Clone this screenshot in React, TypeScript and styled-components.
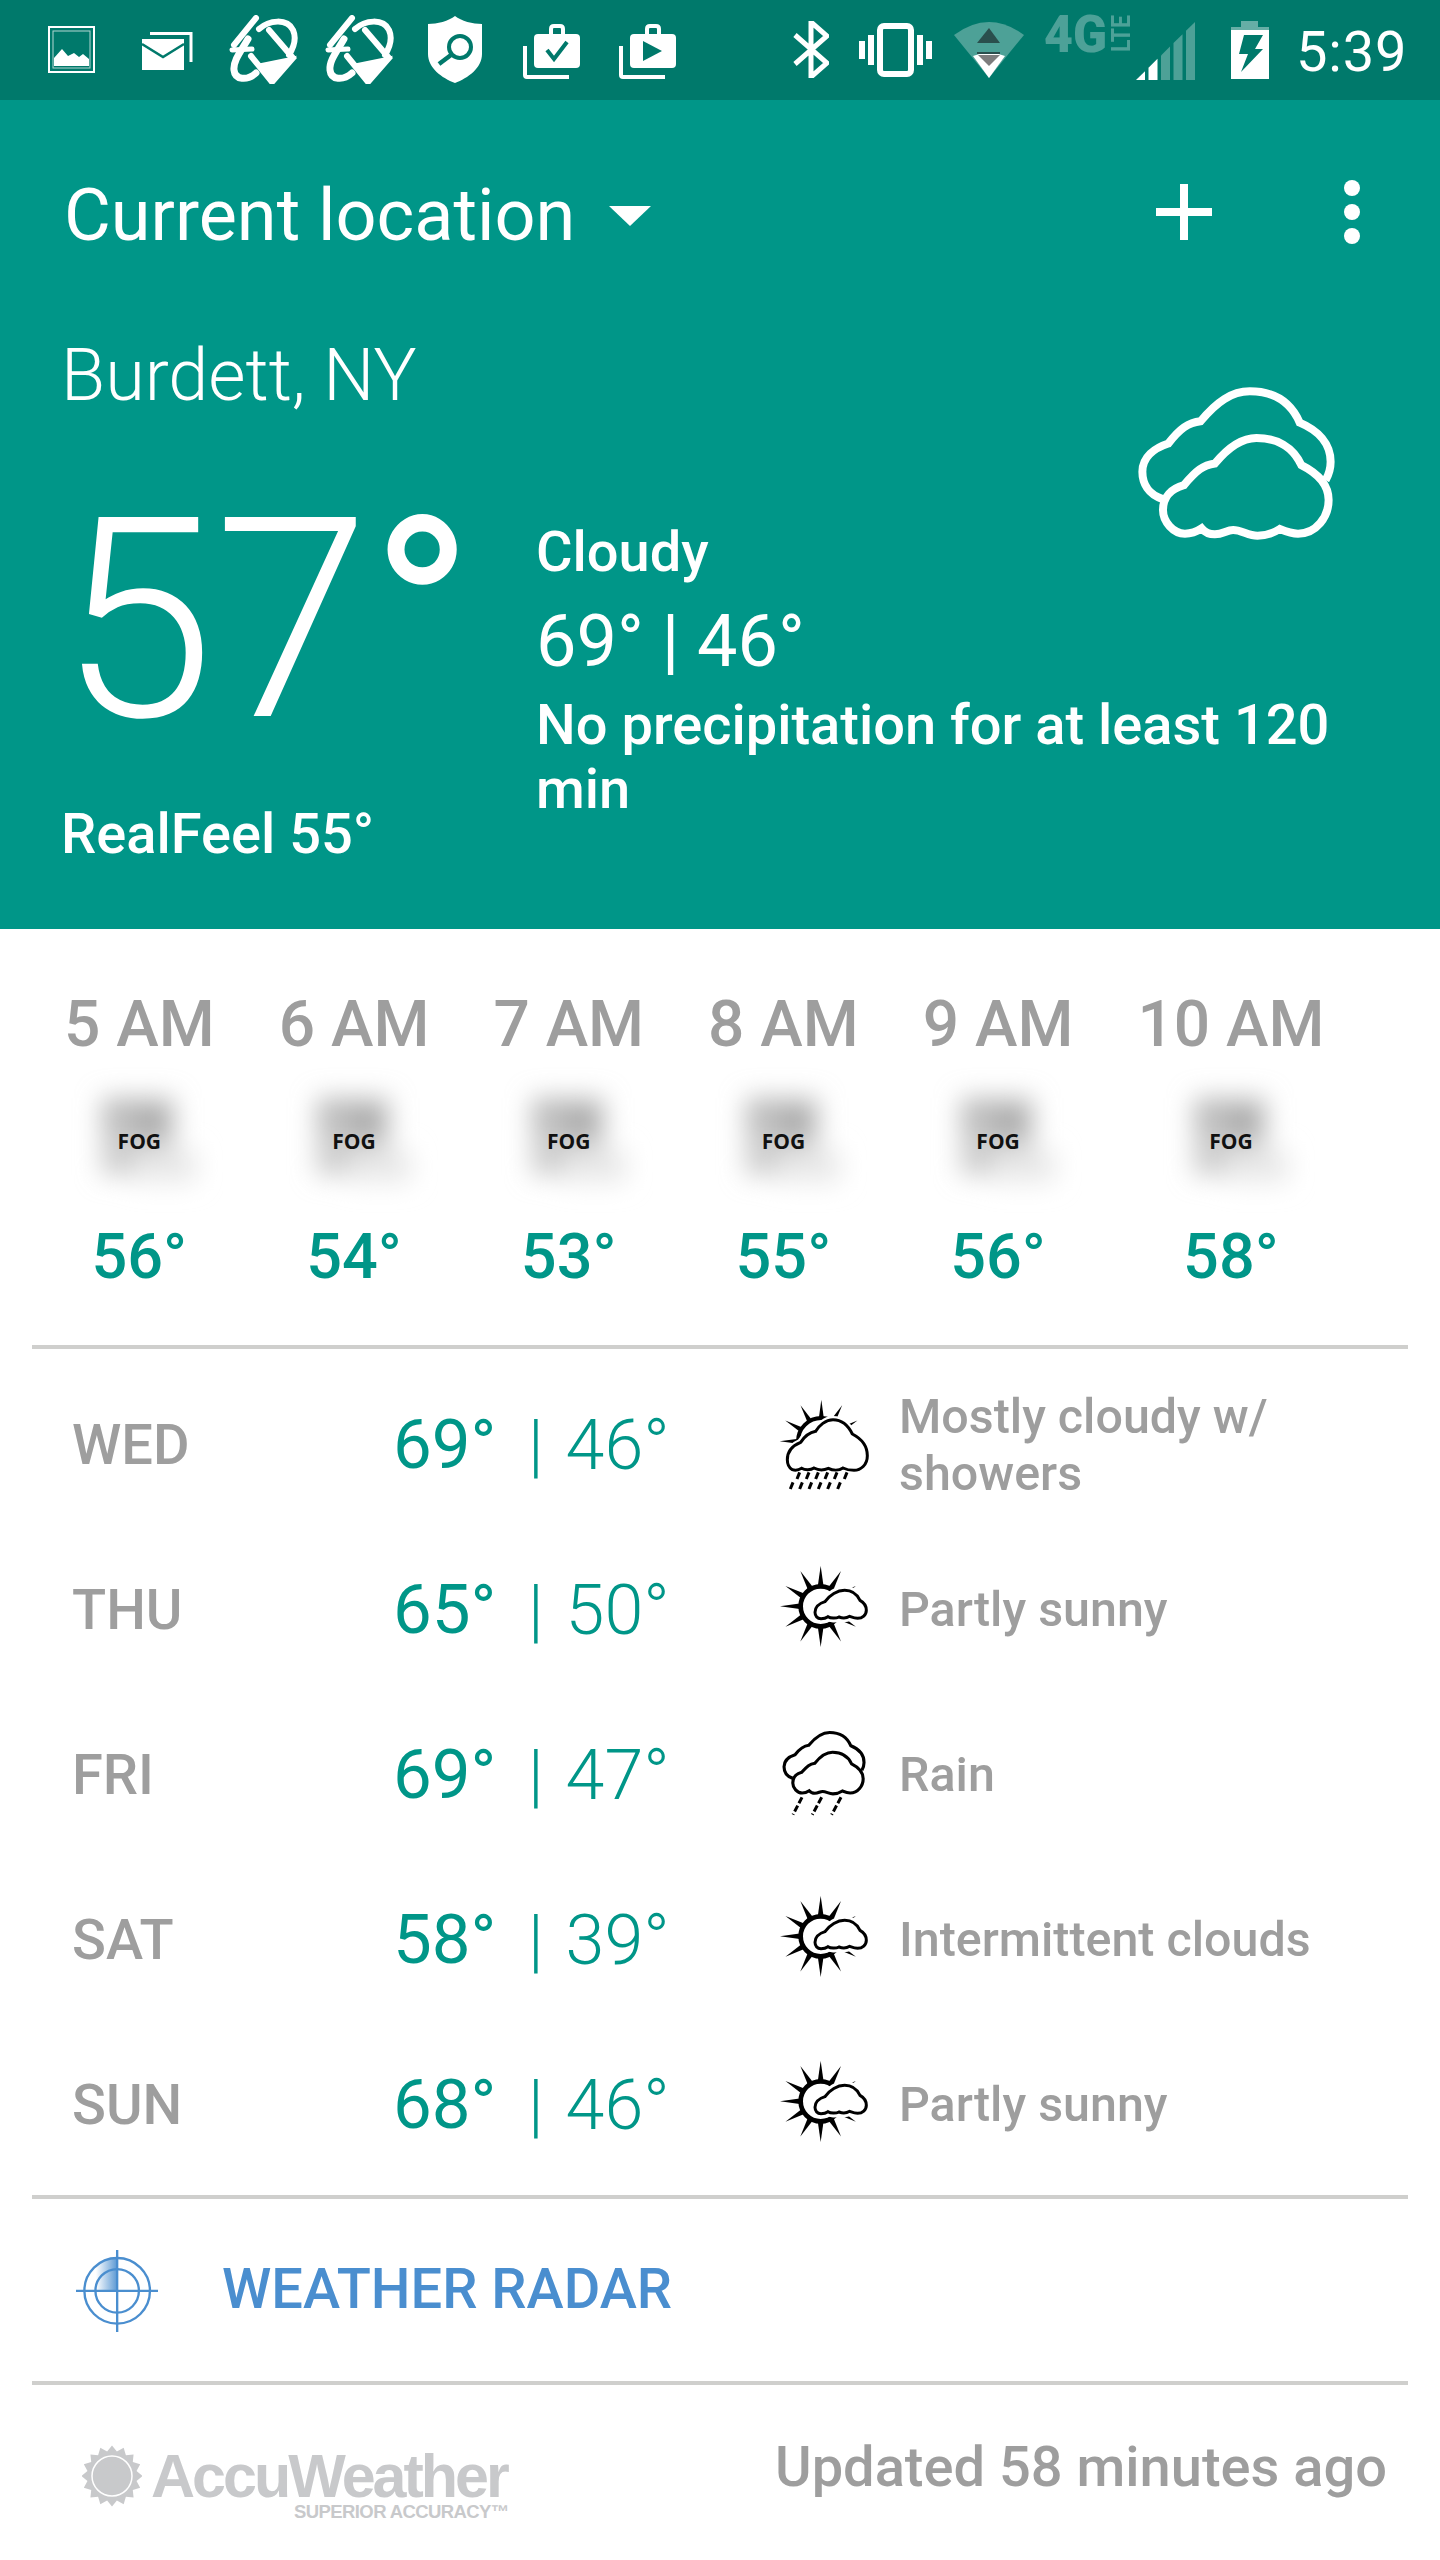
import React from "react";
import styled, { createGlobalStyle } from "styled-components";

const Global = createGlobalStyle`
  html, body { margin: 0; padding: 0; background: #fff; }
  body { font-family: Roboto, "Liberation Sans", sans-serif; }
`;

const Page = styled.div`
  width: 1440px;
  height: 2560px;
  overflow: hidden;
  background: #fff;
`;

const StatusBar = styled.div`
  height: 100px;
  background: #00796b;
  display: flex;
  align-items: flex-start;
  padding-left: 48px;
  box-sizing: border-box;
`;

const StatusIcon = styled.svg<{ $w: number; $h: number; $top: number; $gap: number }>`
  flex: none;
  width: ${(p) => p.$w}px;
  height: ${(p) => p.$h}px;
  margin-top: ${(p) => p.$top}px;
  margin-right: ${(p) => p.$gap}px;
  display: block;
`;

const Clock = styled.div`
  color: #fff;
  font-size: 56px;
  font-weight: 400;
  line-height: 56px;
  margin-top: 24px;
  margin-left: -2px;
  letter-spacing: 0.8px;
`;

const Header = styled.div`
  background: #009688;
  height: 829px;
  color: #fff;
  box-sizing: border-box;
`;

const Toolbar = styled.div`
  display: flex;
  align-items: center;
  height: 56px;
  padding: 88px 0 0 64px;
`;

const LocationTitle = styled.div`
  font-size: 72px;
  line-height: 56px;
  font-weight: 400;
`;

const Caret = styled.div`
  width: 0;
  height: 0;
  border-left: 21px solid transparent;
  border-right: 21px solid transparent;
  border-top: 20px solid #fff;
  margin-left: 34px;
  margin-right: 505px;
`;

const PlusIcon = styled.svg`
  width: 56px;
  height: 56px;
  margin-right: 132px;
  margin-top: -8px;
  flex: none;
`;

const MoreIcon = styled.svg`
  width: 16px;
  height: 64px;
  margin-top: -8px;
  flex: none;
`;

const Body = styled.div`
  display: flex;
`;

const LeftCol = styled.div`
  width: 476px;
  flex: none;
  box-sizing: border-box;
  padding: 92px 0 0 61px;
`;

const City = styled.div`
  font-size: 72px;
  font-weight: 300;
  line-height: 80px;
`;

const BigTemp = styled.div`
  font-size: 280px;
  font-weight: 300;
  line-height: 300px;
  margin: 54px 0 0 -2px;
  white-space: nowrap;
`;

const BigDegree = styled.span`
  font-weight: 400;
`;

const RealFeel = styled.div`
  font-size: 56px;
  font-weight: 500;
  line-height: 60px;
  margin-top: 34px;
`;

const RightCol = styled.div`
  width: 830px;
  margin-left: 60px;
  flex: none;
  display: flex;
  flex-direction: column;
`;

const BigCloud = styled.svg`
  width: 197px;
  height: 153px;
  margin: 143px 0 0 602px;
  flex: none;
`;

const Condition = styled.div`
  font-size: 56px;
  font-weight: 500;
  line-height: 60px;
  margin-top: -18px;
`;

const HiLo = styled.div`
  font-size: 72px;
  font-weight: 400;
  line-height: 80px;
  margin-top: 20px;
`;

const Precip = styled.div`
  font-size: 56px;
  font-weight: 500;
  line-height: 64px;
  margin-top: 11px;
  width: 830px;
`;

const Hours = styled.div`
  display: flex;
  gap: 64px;
  padding: 60px 0 0 64px;
  height: 416px;
  box-sizing: border-box;
`;

const HourCol = styled.div`
  display: flex;
  flex-direction: column;
  align-items: center;
`;

const HourLabel = styled.div`
  font-size: 64px;
  line-height: 72px;
  color: #9e9e9e;
  font-weight: 500;
`;

const FogBox = styled.div`
  position: relative;
  width: 130px;
  height: 110px;
  margin-top: 29px;
`;

const FogBlob = styled.svg`
  position: absolute;
  inset: 0;
  width: 130px;
  height: 110px;
  overflow: visible;
`;

const FogText = styled.div`
  position: absolute;
  left: 0;
  right: 0;
  top: 39px;
  text-align: center;
  font-family: "Open Sans", sans-serif;
  font-size: 21px;
  line-height: 24px;
  font-weight: 700;
  color: #111;
`;

const HourTemp = styled.div`
  font-size: 63px;
  line-height: 70px;
  font-weight: 500;
  color: #009688;
  margin-top: 22px;
`;

const Rule = styled.div`
  height: 4px;
  background: #cfcfcd;
  margin: 0 32px;
`;

const Forecast = styled.div`
  display: flex;
  flex-direction: column;
  height: 846px;
  box-sizing: border-box;
  padding-top: 13px;
`;

const DayRow = styled.div`
  display: flex;
  align-items: center;
  height: 165px;
  flex: none;
`;

const DayName = styled.div`
  width: 393px;
  padding-left: 72px;
  box-sizing: border-box;
  font-size: 56px;
  font-weight: 500;
  color: #9e9e9e;
  flex: none;
`;

const TempHigh = styled.div`
  width: 135px;
  font-size: 69px;
  color: #009688;
  flex: none;
`;

const TempLow = styled.div`
  width: 254px;
  font-size: 70px;
  font-weight: 300;
  color: #009688;
  flex: none;
  white-space: nowrap;
  word-spacing: 5px;
`;

const DayIconBox = styled.div`
  width: 120px;
  flex: none;
  display: flex;
  justify-content: flex-start;
  margin-left: -3px;
`;

const DayIcon = styled.svg`
  width: 90px;
  height: 92px;
  display: block;
`;

const DayText = styled.div`
  width: 480px;
  font-size: 48.4px;
  line-height: 57px;
  font-weight: 500;
  color: #9e9e9e;
`;

const RadarRow = styled.div`
  display: flex;
  align-items: center;
  height: 182px;
  padding-left: 76px;
`;

const RadarIcon = styled.svg`
  width: 82px;
  height: 82px;
  margin-right: 64px;
  margin-top: 2px;
  flex: none;
`;

const RadarLabel = styled.div`
  font-size: 56px;
  font-weight: 500;
  color: #4a8ecf;
  margin-bottom: 2px;
`;

const Footer = styled.div`
  display: flex;
  justify-content: space-between;
  padding: 66px 53px 0 82px;
`;

const Logo = styled.div`
  display: flex;
  align-items: flex-start;
  gap: 9px;
  color: #c8c9cb;
  font-family: "Liberation Sans", Arial, sans-serif;
  font-weight: 700;
`;

const LogoSun = styled.svg`
  width: 60px;
  height: 62px;
  margin-top: -6px;
  flex: none;
`;

const LogoWords = styled.div`
  display: flex;
  flex-direction: column;
  align-items: flex-end;
`;

const LogoName = styled.div`
  font-size: 61px;
  line-height: 50px;
  letter-spacing: -3px;
  margin-right: 2px;
`;

const LogoTag = styled.div`
  font-size: 18.5px;
  line-height: 20px;
  letter-spacing: -0.6px;
  margin-top: 1px;
`;

const Updated = styled.div`
  font-size: 56px;
  font-weight: 500;
  color: #9e9e9e;
  line-height: 64px;
  margin-top: -16px;
`;

const BG = "#00796b";

const TLogo = () => (
  <g fill="none" stroke="#fff" strokeWidth="5" strokeLinecap="round">
    <path d="M27 3 L5 30" strokeWidth="6" />
    <path d="M30 14 C40 5 58 3 64 15 C68 24 65 32 60 40" strokeWidth="6" />
    <path d="M40 15 L64 43 L43 67 L22 41" strokeWidth="6" />
    <path d="M19 24 C12 36 4 46 5 55 C6 65 18 66 27 58" strokeWidth="7" />
    <path d="M3 35 L23 34" strokeWidth="5" />
    <path d="M64 43 L43 67 L30 50 Z" fill="#fff" strokeWidth="3" />
  </g>
);

const ClipBase = ({ children }: { children: React.ReactNode }) => (
  <>
    <path d="M2 22 V51 Q2 53 4 53 H46" fill="none" stroke="#fff" strokeWidth="4" />
    <rect x="11" y="10" width="46" height="34" rx="4" fill="#fff" />
    <path d="M28 10 V5 Q28 2 31 2 H37 Q40 2 40 5 V10" fill="none" stroke="#fff" strokeWidth="4" />
    {children}
  </>
);

const signalBars = [0, 12.5, 25, 37.5, 50].map((x0, i) => {
  const x1 = x0 + 9;
  const h = (x: number) => 60 - (x * 60) / 61;
  return { points: `${x0},60 ${x0},${h(x0)} ${x1},${h(x1)} ${x1},60`, on: i < 2 };
});

const StatusIcons = () => (
  <>
    <StatusIcon $w={47} $h={47} $top={26} $gap={47} viewBox="0 0 47 47">
      <rect x="1" y="1" width="45" height="45" fill="none" stroke="#fff" strokeWidth="2" />
      <rect x="5" y="5" width="37" height="37" fill="none" stroke="#fff" strokeWidth="1" opacity="0.7" />
      <path d="M6 40 V32 L14 23 L20 30 L26 27 L31 31 L35 28 L41 33 V40 Z" fill="#fff" />
    </StatusIcon>
    <StatusIcon $w={51} $h={40} $top={30} $gap={36} viewBox="0 0 51 40">
      <path d="M8 3.5 H49 V32" fill="none" stroke="#fff" strokeWidth="3" />
      <rect x="0" y="9" width="42" height="31" fill="#fff" />
      <path d="M0 14 L21 27 L42 14" fill="none" stroke={BG} strokeWidth="2.5" />
    </StatusIcon>
    <StatusIcon $w={69} $h={69} $top={15} $gap={27} viewBox="0 0 69 69"><TLogo /></StatusIcon>
    <StatusIcon $w={69} $h={69} $top={15} $gap={34} viewBox="0 0 69 69"><TLogo /></StatusIcon>
    <StatusIcon $w={54} $h={67} $top={16} $gap={41} viewBox="0 0 54 67">
      <path d="M27 0 C33 5 45 8 54 8 V38 C54 52 40 62 27 67 C14 62 0 52 0 38 V8 C9 8 21 5 27 0 Z" fill="#fff" />
      <circle cx="32" cy="31" r="11" fill="none" stroke={BG} strokeWidth="4" />
      <path d="M23 39 L11 48" stroke={BG} strokeWidth="4.5" />
    </StatusIcon>
    <StatusIcon $w={57} $h={55} $top={24} $gap={39} viewBox="0 0 57 55">
      <ClipBase>
        <path d="M24 26 L31 35 L44 18" fill="none" stroke={BG} strokeWidth="4" />
      </ClipBase>
    </StatusIcon>
    <StatusIcon $w={57} $h={55} $top={24} $gap={117} viewBox="0 0 57 55">
      <ClipBase>
        <path d="M24 17 L43 27 L24 37 Z" fill={BG} />
      </ClipBase>
    </StatusIcon>
    <StatusIcon $w={36} $h={57} $top={21} $gap={30} viewBox="0 0 36 57">
      <path d="M2 14 L34 42 L18 56 V1 L34 15 L2 43" fill="none" stroke="#fff" strokeWidth="5" />
    </StatusIcon>
    <StatusIcon $w={73} $h={54} $top={23} $gap={22} viewBox="0 0 73 54">
      <rect x="21" y="3" width="31" height="48" rx="4" fill="none" stroke="#fff" strokeWidth="6" />
      <rect x="0" y="18" width="6" height="18" fill="#fff" />
      <rect x="9" y="12" width="6" height="30" fill="#fff" />
      <rect x="58" y="12" width="6" height="30" fill="#fff" />
      <rect x="67" y="18" width="6" height="18" fill="#fff" />
    </StatusIcon>
    <StatusIcon $w={71} $h={56} $top={22} $gap={19} viewBox="0 0 71 56">
      <path d="M0 13 Q35 -13 70 13 L35 56 Z" fill="#fff" opacity="0.3" />
      <path d="M19 34 Q35 27 51 34 L35 56 Z" fill="#fff" />
      <path d="M23 21 L35 6 L46 21 Z" fill="#2a4f4d" />
      <rect x="23" y="30" width="23" height="2" fill="#2a4f4d" />
      <path d="M24 33 H46 L35 44 Z" fill="#7d7d7d" />
    </StatusIcon>
    <StatusIcon $w={92} $h={70} $top={0} $gap={0} viewBox="0 0 92 70">
      <text x="0" y="52" fontFamily="Roboto, sans-serif" fontWeight="900" fontSize="52" fill="#fff" opacity="0.3" textLength="63" lengthAdjust="spacingAndGlyphs">4G</text>
      <text transform="translate(86 52) rotate(-90)" x="0" y="0" fontFamily="Roboto, sans-serif" fontWeight="700" fontSize="25" fill="#fff" opacity="0.3" textLength="37" lengthAdjust="spacingAndGlyphs">LTE</text>
    </StatusIcon>
    <StatusIcon $w={61} $h={60} $top={20} $gap={34} viewBox="0 0 61 60">
      {signalBars.map((b) => (
        <polygon key={b.points} points={b.points} fill="#fff" opacity={b.on ? 1 : 0.3} />
      ))}
    </StatusIcon>
    <StatusIcon $w={38} $h={58} $top={21} $gap={29} viewBox="0 0 38 58">
      <path d="M10 0 H27 V6 H38 V9 H0 V6 H10 Z" fill="#fff" opacity="0.4" />
      <rect x="0" y="9" width="38" height="49" fill="#fff" />
      <path d="M13 14 H32 L24 28 H32 L10 51 L17 33 H8 Z" fill={BG} />
    </StatusIcon>
  </>
);

const DOUBLE_BACK =
  "M248 1042 C205 1028 187 995 187 960 C187 915 225 888 265 875 C300 830 325 812 362 808 C410 750 455 718 510 718 C590 718 635 755 660 812 C715 835 753 875 753 930 C753 950 748 968 738 985";
const DOUBLE_FRONT =
  "M312 1000 C350 955 370 940 405 935 C450 880 490 858 530 858 C590 858 640 885 665 940 C715 965 747 1000 747 1045 C747 1095 710 1146 655 1146 C635 1146 620 1140 600 1132 C580 1145 560 1152 533 1152 C505 1152 485 1135 460 1135 C440 1135 430 1148 405 1148 C390 1148 375 1142 365 1130 C350 1140 335 1146 315 1146 C280 1146 249 1110 249 1075 C249 1035 275 1010 312 1000 Z";

const rays = (cx: number, cy: number, angles: number[], r0: number, r1: number, w: number) =>
  angles.map((a) => {
    const t = (a * Math.PI) / 180;
    const ux = Math.sin(t);
    const uy = -Math.cos(t);
    const bx = cx + ux * r0;
    const by = cy + uy * r0;
    const p = `${bx - uy * w},${by + ux * w} ${cx + ux * r1},${cy + uy * r1} ${bx + uy * w},${by - ux * w}`;
    return <polygon key={a} points={p} fill="#000" />;
  });

const SMALL_CLOUD =
  "M168 700 C168 682 182 673 198 668 C212 648 235 634 257 634 C280 634 295 648 303 664 C316 671 322 682 322 694 C322 708 310 718 296 718 C287 718 280 715 272 712 C262 718 250 718 240 714 C230 719 215 718 207 713 C200 718 192 719 186 719 C175 719 168 711 168 700 Z";
const SHOWER_CLOUD =
  "M85 232 C85 205 105 188 125 180 C138 160 155 150 170 147 C180 130 200 112 222 112 C250 112 268 130 280 155 C305 168 325 190 325 220 C325 248 305 264 285 264 C270 264 262 262 252 257 C240 265 222 265 208 258 C195 264 178 264 165 257 C155 264 138 264 128 258 C118 264 108 265 100 262 C90 256 85 245 85 232 Z";

const PartlySunnyIcon = () => (
  <DayIcon viewBox="60 555 270 276">
    {rays(185, 682, [0, 30, 60, 90, 120, 150, 180, 210, 240, 270, 300, 330], 58, 122, 9)}
    <circle cx="185" cy="682" r="60" fill="#fff" stroke="#000" strokeWidth="14" />
    <path d={SMALL_CLOUD} fill="#fff" stroke="#fff" strokeWidth="26" />
    <path d={SMALL_CLOUD} fill="#fff" stroke="#000" strokeWidth="9" />
  </DayIcon>
);

const ShowerIcon = () => (
  <DayIcon viewBox="60 50 270 276">
    {rays(187, 177, [0, 30, 60, 90, 300, 330, 270, 240], 58, 125, 9)}
    <circle cx="187" cy="177" r="70" fill="#fff" stroke="#000" strokeWidth="12" />
    <path d={SHOWER_CLOUD} fill="#fff" stroke="#fff" strokeWidth="22" />
    <path d={SHOWER_CLOUD} fill="#fff" stroke="#000" strokeWidth="9" />
    <g stroke="#000" strokeWidth="9">
      {[122, 150, 178, 206, 234, 264].map((x) => (
        <path key={x} d={`M${x} 270 L${x - 8} 290`} />
      ))}
      {[100, 128, 156, 184, 212, 242].map((x) => (
        <path key={x} d={`M${x + 2} 300 L${x - 6} 320`} />
      ))}
    </g>
  </DayIcon>
);

const RainIcon = () => (
  <DayIcon viewBox="60 85 270 276">
    <g transform="translate(70 90) scale(0.424) translate(-175 -705)" fill="none" stroke="#000" strokeWidth="22">
      <path d={DOUBLE_BACK} />
      <path d={DOUBLE_FRONT} />
    </g>
    <g stroke="#000" strokeWidth="9">
      <path d="M129 290 L102 342" strokeDasharray="20 8" />
      <path d="M188 290 L160 342" strokeDasharray="20 8" />
      <path d="M246 290 L218 342" strokeDasharray="20 8" />
    </g>
  </DayIcon>
);

const FogIcon = () => (
  <FogBox>
    <FogBlob viewBox="0 0 130 110">
      <defs>
        <filter id="fogblur" x="-60%" y="-60%" width="220%" height="220%">
          <feGaussianBlur stdDeviation="13" />
        </filter>
      </defs>
      <g filter="url(#fogblur)">
        <rect x="28" y="8" width="72" height="64" fill="#bbb" />
        <rect x="28" y="40" width="67" height="45" fill="#ccc" />
        <rect x="60" y="60" width="62" height="32" fill="#e8e8e8" />
        <circle cx="77" cy="34" r="12" fill="#999" />
      </g>
    </FogBlob>
    <FogText>FOG</FogText>
  </FogBox>
);

const hours = [
  ["5 AM", "56°"],
  ["6 AM", "54°"],
  ["7 AM", "53°"],
  ["8 AM", "55°"],
  ["9 AM", "56°"],
  ["10 AM", "58°"],
];

const days: [string, string, string, React.ReactNode, string][] = [
  ["WED", "69°", "46°", <ShowerIcon />, "Mostly cloudy w/ showers"],
  ["THU", "65°", "50°", <PartlySunnyIcon />, "Partly sunny"],
  ["FRI", "69°", "47°", <RainIcon />, "Rain"],
  ["SAT", "58°", "39°", <PartlySunnyIcon />, "Intermittent clouds"],
  ["SUN", "68°", "46°", <PartlySunnyIcon />, "Partly sunny"],
];

const sunPoints = Array.from({ length: 32 }, (_, i) => {
  const r = i % 2 === 0 ? 30.5 : 25;
  const t = (i * Math.PI) / 16;
  return `${30 + r * Math.sin(t)},${31 - r * Math.cos(t)}`;
}).join(" ");

export default function App() {
  return (
    <Page>
      <Global />
      <StatusBar>
        <StatusIcons />
        <Clock>5:39</Clock>
      </StatusBar>
      <Header>
        <Toolbar>
          <LocationTitle>Current location</LocationTitle>
          <Caret />
          <PlusIcon viewBox="0 0 56 56">
            <rect x="24" y="0" width="8" height="56" fill="#fff" />
            <rect x="0" y="24" width="56" height="8" fill="#fff" />
          </PlusIcon>
          <MoreIcon viewBox="0 0 16 64">
            <circle cx="8" cy="8" r="8" fill="#fff" />
            <circle cx="8" cy="32" r="8" fill="#fff" />
            <circle cx="8" cy="56" r="8" fill="#fff" />
          </MoreIcon>
        </Toolbar>
        <Body>
          <LeftCol>
            <City>Burdett, NY</City>
            <BigTemp>
              57<BigDegree>°</BigDegree>
            </BigTemp>
            <RealFeel>RealFeel 55°</RealFeel>
          </LeftCol>
          <RightCol>
            <BigCloud viewBox="175 705 590 460">
              <g fill="none" stroke="#fff" strokeWidth="24">
                <path d={DOUBLE_BACK} />
                <path d={DOUBLE_FRONT} />
              </g>
            </BigCloud>
            <Condition>Cloudy</Condition>
            <HiLo>69° | 46°</HiLo>
            <Precip>No precipitation for at least 120 min</Precip>
          </RightCol>
        </Body>
      </Header>
      <Hours>
        {hours.map(([label, temp]) => (
          <HourCol key={label}>
            <HourLabel>{label}</HourLabel>
            <FogIcon />
            <HourTemp>{temp}</HourTemp>
          </HourCol>
        ))}
      </Hours>
      <Rule />
      <Forecast>
        {days.map(([day, hi, lo, icon, text]) => (
          <DayRow key={day}>
            <DayName>{day}</DayName>
            <TempHigh>{hi}</TempHigh>
            <TempLow>| {lo}</TempLow>
            <DayIconBox>{icon}</DayIconBox>
            <DayText>{text}</DayText>
          </DayRow>
        ))}
      </Forecast>
      <Rule />
      <RadarRow>
        <RadarIcon viewBox="108 93 245 245">
          <defs>
            <linearGradient id="sweep" x1="0" x2="1" y1="0" y2="0">
              <stop offset="0.35" stopColor="#4a8ecf" stopOpacity="0" />
              <stop offset="1" stopColor="#4a8ecf" stopOpacity="0.9" />
            </linearGradient>
          </defs>
          <path d="M231 215 V117 A98 98 0 0 0 133 215 Z" fill="url(#sweep)" />
          <g fill="none" stroke="#4a8ecf" strokeWidth="7">
            <circle cx="231" cy="215" r="98" />
            <circle cx="231" cy="215" r="65" />
            <path d="M231 93 V338 M108 215 H353" />
          </g>
        </RadarIcon>
        <RadarLabel>WEATHER RADAR</RadarLabel>
      </RadarRow>
      <Rule />
      <Footer>
        <Logo>
          <LogoSun viewBox="0 0 60 62">
            <polygon points={sunPoints} fill="#c8c9cb" />
            <circle cx="30" cy="31" r="20" fill="#c8c9cb" stroke="#fff" strokeWidth="1.5" />
          </LogoSun>
          <LogoWords>
            <LogoName>AccuWeather</LogoName>
            <LogoTag>SUPERIOR ACCURACY™</LogoTag>
          </LogoWords>
        </Logo>
        <Updated>Updated 58 minutes ago</Updated>
      </Footer>
    </Page>
  );
}
